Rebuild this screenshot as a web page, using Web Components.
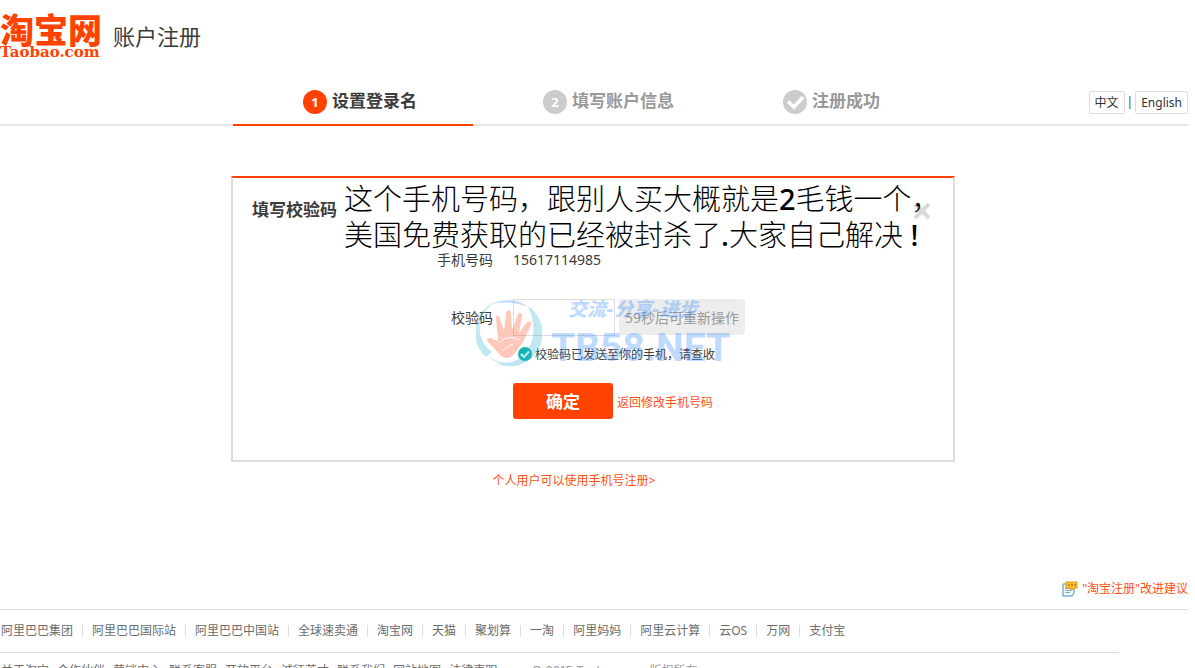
<!DOCTYPE html>
<html lang="zh-CN">
<head>
<meta charset="utf-8">
<title>账户注册</title>
<style>
html{scrollbar-width:none;overflow-x:hidden}
body{margin:0 7px 0 0;background:#fff;color:#3c3c3c;font:12px/20px "Noto Sans","Noto Sans CJK SC",sans-serif}
</style>
</head>
<body>
<register-page></register-page>
<script>
const define = (name, html) => {
  const tpl = document.createElement('template');
  tpl.innerHTML = html;
  customElements.define(name, class extends HTMLElement {
    constructor() {
      super();
      this.attachShadow({ mode: 'open' }).append(tpl.content.cloneNode(true));
    }
  });
};

define('brand-logo', `
<style>
:host{display:flex;align-items:center;height:72px;margin-bottom:8px}
a{display:block;width:104px;padding-top:4px;color:#ff4200;text-decoration:none;white-space:nowrap}
.cn{display:block;font:900 34px/28px "Noto Sans CJK SC",sans-serif}
.en{display:block;font:bold 15px/18px "DejaVu Serif",serif}
h1{margin:0 0 0 9px;font-size:22px;line-height:24px;font-weight:400}
</style>
<a href="#"><span class="cn">淘宝网</span><span class="en">Taobao.com</span></a>
<h1>账户注册</h1>`);

define('step-item', `
<style>
:host{display:flex;align-items:center;gap:5px;width:170px;height:44px;padding-left:70px;color:#999;border-bottom:2px solid #e5e5e5;font-size:17px;font-weight:700;--dot:#ccc}
:host([active]){color:#3c3c3c;border-color:#ff4200;--dot:#ff4200}
.dot{display:flex;align-items:center;justify-content:center;width:24px;height:24px;border-radius:50%;background:var(--dot);color:#fff;font-size:13px}
.text{line-height:24px;padding-bottom:2px}
</style>
<span class="dot"><slot name="mark"></slot></span><span class="text"><slot></slot></span>`);

define('lang-switch', `
<style>
:host{display:flex;align-items:center;gap:2px}
button{box-sizing:border-box;height:23px;padding:0 5px;border:1px solid #ddd;border-radius:2px;background:#fff;color:#333;font:12px "Noto Sans","Noto Sans CJK SC",sans-serif}
</style>
<button type="button">中文</button><span>|</span><button type="button">English</button>`);

define('page-header', `
<style>
:host{display:block}
.bar{display:grid;grid-template-columns:1fr auto 1fr;align-items:end}
.line{height:44px;border-bottom:2px solid #e5e5e5;display:flex;justify-content:flex-end;align-items:center}
.steps{display:flex;padding-right:2px;background:linear-gradient(#e5e5e5,#e5e5e5) bottom/100% 2px no-repeat}
svg{display:block}
</style>
<brand-logo></brand-logo>
<div class="bar">
  <div class="line"></div>
  <div class="steps">
    <step-item active><span slot="mark">1</span>设置登录名</step-item>
    <step-item><span slot="mark">2</span>填写账户信息</step-item>
    <step-item><svg slot="mark" width="24" height="24" viewBox="0 0 24 24"><path d="M5 11.500l6 5.500 9-10" fill="none" stroke="#fff" stroke-width="3.600"/></svg>注册成功</step-item>
  </div>
  <div class="line"><lang-switch></lang-switch></div>
</div>`);

define('water-mark', `
<style>
:host{display:flex;align-items:flex-start;gap:9px;pointer-events:none;color:#2d86ff;opacity:.3}
svg{display:block;flex:none}
.words{display:flex;flex-direction:column}
.motto{padding-left:17px;font:italic 900 19px/18px "DejaVu Sans","Noto Sans CJK SC",sans-serif;white-space:pre}
.site{font:bold 39px/60px Roboto,sans-serif}
</style>
<svg width="66" height="66" viewBox="0 0 66 66">
  <path d="M45 2A33 33 0 0 0 10 57L16 52A29 29 0 0 1 45 2Z" fill="#2db4d2"/>
  <path d="M52 6A33 33 0 0 1 19 63Q39 66 50 52Q64 34 52 6Z" fill="#2db4d2"/>
  <path d="M17 4A32 32 0 0 1 52 7Q34 0 17 4ZM12 57Q33 72 54 56Q36 70 12 57Z" fill="#2d86ff"/>
  <path d="M25 56Q18 48 12 42Q9 38 14 38L22 41L20 18Q20 14 23 16L28 31L30 12Q34 8 35 13L36 30L42 14Q46 11 46 16L43 33L51 22Q56 20 55 25L47 42L39 53Q33 61 25 56Z" fill="#ff4b1e"/>
  <path d="M23 43Q31 34 44 40M27 51Q34 44 37 45" fill="none" stroke="#fff" stroke-width="1"/>
</svg>
<div class="words"><span class="motto">交流-分享-进步</span><span class="site">TB58.NET</span></div>`);

define('verify-panel', `
<style>
:host{display:block;position:relative;box-sizing:border-box;width:724px;max-width:100%;border:2px solid #ddd;border-top-color:#ff4200}
header{display:flex;justify-content:space-between;padding:20px 22px 27px 19px}
h2{margin:0;font-size:17px;line-height:24px}
.close{display:block;border:0;padding:0;background:none;width:18px;height:24px}
.close svg{display:block}
form{display:grid;grid-template-columns:260px 1fr;column-gap:20px;font-size:14px;line-height:22px;padding-bottom:41px}
label,.label{text-align:right}
.code{display:flex;gap:4px;margin-top:28px}
label{margin-top:28px;line-height:37px}
input{box-sizing:border-box;width:102px;height:37px;border:1px solid #ddd;padding:0 8px;background:#fff;font:inherit}
button{font-family:inherit}
.resend{width:126px;height:36px;border:0;border-radius:3px;padding:0;background:#ededed;color:#999;font-size:14px}
.sent{grid-column:2;display:flex;align-items:center;gap:3px;margin:8px 0 19px;padding-left:5px;font-size:12px;line-height:20px}
.sent span{padding-top:2px;line-height:18px}
.actions{grid-column:2;display:flex;align-items:center;gap:4px}
.submit{width:100px;height:36px;border:0;border-radius:3px;padding:0 0 2px;background:#ff4200;color:#fff;font-size:17px;font-weight:700}
a{padding-top:4px;color:#ff4f17;font-size:12px;text-decoration:none}
.note{position:absolute;left:111px;top:3px;margin:0;color:#000;font-size:29px;line-height:36px;font-weight:300;white-space:nowrap}
.note b{font-weight:500}
water-mark{position:absolute;left:243px;top:122px}
</style>
<header><h2>填写校验码</h2><button class="close" type="button" aria-label="关闭"><svg width="18" height="20" viewBox="0 0 18 20"><path d="M2 4L16 18M16 4L2 18" stroke="#d9d9d9" stroke-width="4"/></svg></button></header>
<form>
  <span class="label">手机号码</span><span>15617114985</span>
  <label for="code">校验码</label>
  <div class="code"><input id="code" type="text"><button class="resend" type="button">59秒后可重新操作</button></div>
  <div class="sent"><svg width="14" height="14" viewBox="0 0 14 14"><circle cx="7" cy="7" r="7" fill="#12b5b0"/><path d="M3 7l3 3 5-5.500" fill="none" stroke="#fff" stroke-width="2"/></svg><span>校验码已发送至你的手机，请查收</span></div>
  <div class="actions"><button class="submit" type="button">确定</button><a href="#">返回修改手机号码</a></div>
</form>
<water-mark></water-mark>
<p class="note">这个手机号码，跟别人买大概就是<b>2</b>毛钱一个，<br>美国免费获取的已经被封杀了<b>.</b>大家自己解决<b> !</b></p>`);

define('feed-back', `
<style>
:host{display:flex;justify-content:flex-end}
a{display:flex;align-items:center;gap:4px;color:#ff4f17;text-decoration:none}
svg{display:block}
</style>
<a href="#"><svg width="16" height="16" viewBox="0 0 16 16"><path d="M1 3H12V12L10 15H1Z" fill="#f4fbff" stroke="#3f8fba"/><path d="M3 7.500H9M3 9.500H10M3 11.500H8" stroke="#6fb2d8"/><path d="M4 1H15V7H12L9 10V7H4Z" fill="#ffc42e" stroke="#e8960f"/><path d="M6 4H8M9 4H11M12 4H14" stroke="#8a5200"/></svg><span>"淘宝注册"改进建议</span></a>`);

define('page-footer', `
<style>
:host{display:block;border-top:1px solid #ddd}
nav{display:flex;padding-left:1px;white-space:nowrap}
.group{height:42px;align-items:center;margin-right:69px;border-bottom:1px solid #ddd}
a{color:#6c6c6c;text-decoration:none}
.group a{line-height:12px;padding-right:9px;margin-right:9px;border-right:1px solid #ddd}
.group a:last-child{border:0}
.about{gap:8px;line-height:36px}
.copy{margin-left:26px;color:#9c9c9c;font-family:Inter,"Noto Sans CJK SC",sans-serif}
</style>
<nav class="group"><a href="#">阿里巴巴集团</a><a href="#">阿里巴巴国际站</a><a href="#">阿里巴巴中国站</a><a href="#">全球速卖通</a><a href="#">淘宝网</a><a href="#">天猫</a><a href="#">聚划算</a><a href="#">一淘</a><a href="#">阿里妈妈</a><a href="#">阿里云计算</a><a href="#">云OS</a><a href="#">万网</a><a href="#">支付宝</a></nav>
<nav class="about"><a href="#">关于淘宝</a><a href="#">合作伙伴</a><a href="#">营销中心</a><a href="#">联系客服</a><a href="#">开放平台</a><a href="#">诚征英才</a><a href="#">联系我们</a><a href="#">网站地图</a><a href="#">法律声明</a><span class="copy">© 2015 Taobao.com 版权所有</span></nav>`);

define('register-page', `
<style>
:host{display:block}
main{display:flex;flex-direction:column;align-items:center;padding:50px 2px 88px 0}
.switch{margin-top:9px;margin-right:38px;color:#ff4f17;text-decoration:none}
page-footer{margin-top:10px}
</style>
<page-header></page-header>
<main><verify-panel></verify-panel><a class="switch" href="#">个人用户可以使用手机号注册&gt;</a></main>
<feed-back></feed-back>
<page-footer></page-footer>`);
</script>
</body>
</html>
